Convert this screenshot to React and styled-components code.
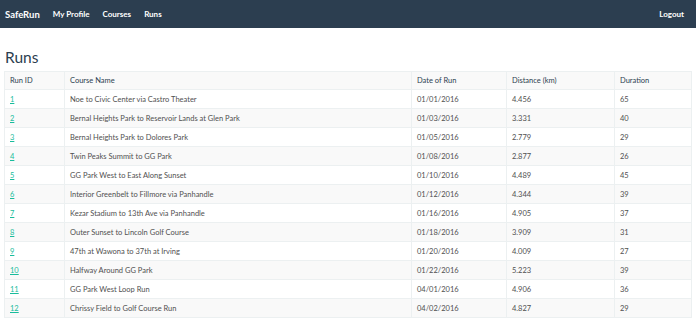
import React from "react";
import styled, { createGlobalStyle } from "styled-components";

const runs = [
  [1, "Noe to Civic Center via Castro Theater", "01/01/2016", "4.456", 65],
  [2, "Bernal Heights Park to Reservoir Lands at Glen Park", "01/03/2016", "3.331", 40],
  [3, "Bernal Heights Park to Dolores Park", "01/05/2016", "2.779", 29],
  [4, "Twin Peaks Summit to GG Park", "01/08/2016", "2.877", 26],
  [5, "GG Park West to East Along Sunset", "01/10/2016", "4.489", 45],
  [6, "Interior Greenbelt to Fillmore via Panhandle", "01/12/2016", "4.344", 39],
  [7, "Kezar Stadium to 13th Ave via Panhandle", "01/16/2016", "4.905", 37],
  [8, "Outer Sunset to Lincoln Golf Course", "01/18/2016", "3.909", 31],
  [9, "47th at Wawona to 37th at Irving", "01/20/2016", "4.009", 27],
  [10, "Halfway Around GG Park", "01/22/2016", "5.223", 39],
  [11, "GG Park West Loop Run", "04/01/2016", "4.906", 36],
  [12, "Chrissy Field to Golf Course Run", "04/02/2016", "4.827", 29],
];

const GlobalStyle = createGlobalStyle`
  body {
    margin: 0;
    font-family: Lato, "Liberation Sans", sans-serif;
    background: #fff;
    color: #2c3e50;
  }
`;

const Navbar = styled.nav`
  display: flex;
  align-items: center;
  height: 28px;
  padding: 0 12px 0 5px;
  background-color: #2c3e50;
`;

const Brand = styled.a`
  color: #fff;
  font-weight: 700;
  font-size: 9.5px;
  margin-right: 13px;
`;

const NavLink = styled.a`
  color: #fff;
  font-weight: 700;
  font-size: 8px;
  margin-right: ${(p) => (p.$last ? "0" : "13px")};
  margin-left: ${(p) => (p.$right ? "auto" : "0")};
`;

const Main = styled.main`
  padding: 0 5px 0 4px;
`;

const Title = styled.h1`
  margin: 21px 0 5px 1px;
  font-size: 15.5px;
  font-weight: 400;
  line-height: 17px;
  color: #2c3e50;
`;

const Table = styled.table`
  width: 687px;
  border-collapse: collapse;
  table-layout: fixed;
  border: 1px solid #ecf0f1;
  font-size: 7.5px;

  tr:nth-child(odd) {
    background-color: #f9f9f9;
  }
`;

const Th = styled.th`
  box-sizing: border-box;
  width: ${(p) => p.$w}px;
  height: 18px;
  padding: 0 5px;
  text-align: left;
  font-weight: 400;
  color: #2c3e50;
  border: 1px solid #ecf0f1;
`;

const Td = styled.td`
  height: 18px;
  padding: 0 5px;
  color: #505050;
  border: 1px solid #ecf0f1;
  white-space: nowrap;
`;

const RunLink = styled.a`
  color: #18bc9c;
  text-decoration: underline;
`;

export default function App() {
  return (
    <>
      <GlobalStyle />
      <Navbar>
        <Brand>SafeRun</Brand>
        <NavLink>My Profile</NavLink>
        <NavLink>Courses</NavLink>
        <NavLink>Runs</NavLink>
        <NavLink $right $last>Logout</NavLink>
      </Navbar>
      <Main>
        <Title>Runs</Title>
        <Table>
          <tbody>
            <tr>
              <Th $w={60}>Run ID</Th>
              <Th $w={347}>Course Name</Th>
              <Th $w={95}>Date of Run</Th>
              <Th $w={108}>Distance (km)</Th>
              <Th $w={77}>Duration</Th>
            </tr>
            {runs.map(([id, name, date, dist, dur]) => (
              <tr key={id}>
                <Td>
                  <RunLink>{id}</RunLink>
                </Td>
                <Td>{name}</Td>
                <Td>{date}</Td>
                <Td>{dist}</Td>
                <Td>{dur}</Td>
              </tr>
            ))}
          </tbody>
        </Table>
      </Main>
    </>
  );
}
